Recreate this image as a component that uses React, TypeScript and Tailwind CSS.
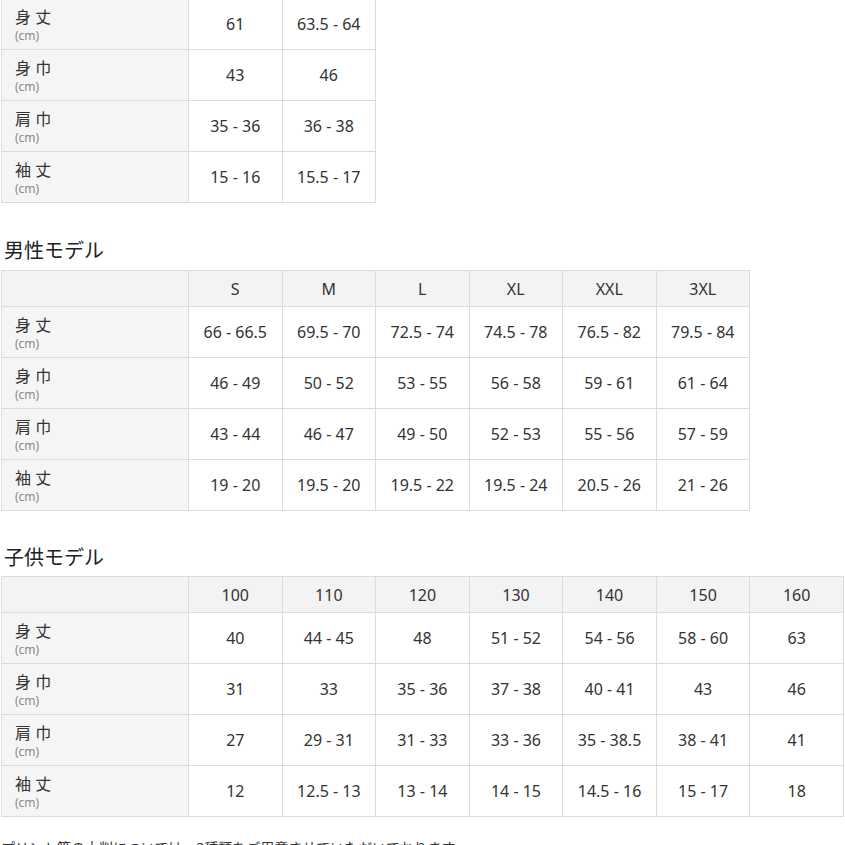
import React from "react";

type Row = { label: string; values: string[] };

const font = {
  fontFamily: '"Noto Sans", "Noto Sans CJK JP", sans-serif',
};

const womenRows: Row[] = [
  { label: "身 丈", values: ["61", "63.5 - 64"] },
  { label: "身 巾", values: ["43", "46"] },
  { label: "肩 巾", values: ["35 - 36", "36 - 38"] },
  { label: "袖 丈", values: ["15 - 16", "15.5 - 17"] },
];

const menSizes = ["S", "M", "L", "XL", "XXL", "3XL"];
const menRows: Row[] = [
  { label: "身 丈", values: ["66 - 66.5", "69.5 - 70", "72.5 - 74", "74.5 - 78", "76.5 - 82", "79.5 - 84"] },
  { label: "身 巾", values: ["46 - 49", "50 - 52", "53 - 55", "56 - 58", "59 - 61", "61 - 64"] },
  { label: "肩 巾", values: ["43 - 44", "46 - 47", "49 - 50", "52 - 53", "55 - 56", "57 - 59"] },
  { label: "袖 丈", values: ["19 - 20", "19.5 - 20", "19.5 - 22", "19.5 - 24", "20.5 - 26", "21 - 26"] },
];

const kidsSizes = ["100", "110", "120", "130", "140", "150", "160"];
const kidsRows: Row[] = [
  { label: "身 丈", values: ["40", "44 - 45", "48", "51 - 52", "54 - 56", "58 - 60", "63"] },
  { label: "身 巾", values: ["31", "33", "35 - 36", "37 - 38", "40 - 41", "43", "46"] },
  { label: "肩 巾", values: ["27", "29 - 31", "31 - 33", "33 - 36", "35 - 38.5", "38 - 41", "41"] },
  { label: "袖 丈", values: ["12", "12.5 - 13", "13 - 14", "14 - 15", "14.5 - 16", "15 - 17", "18"] },
];

const SizeTable: React.FC<{ sizes?: string[]; rows: Row[]; width: string }> = ({ sizes, rows, width }) => {
  const cols = rows[0].values.length;
  return (
    <table className={`table-fixed border-collapse ${width}`}>
      <colgroup>
        <col className="w-[187px]" />
        {Array.from({ length: cols }).map((_, i) => (
          <col key={i} />
        ))}
      </colgroup>
      {sizes && (
        <thead>
          <tr className="h-[36px] bg-[#f3f3f3]">
            <th className="border border-[#dcdcdc]"></th>
            {sizes.map((s) => (
              <th key={s} className="border border-[#dcdcdc] text-center text-[16px] font-normal text-[#333]">
                {s}
              </th>
            ))}
          </tr>
        </thead>
      )}
      <tbody>
        {rows.map((r) => (
          <tr key={r.label} className="h-[51px]">
            <td className="border border-[#dcdcdc] bg-[#f5f5f5] pl-[13px] pt-[2px] align-middle">
              <div className="text-[16px] leading-[22px] text-[#333]">{r.label}</div>
              <div className="text-[12px] leading-[16px] text-[#888]">(cm)</div>
            </td>
            {r.values.map((v, i) => (
              <td key={i} className="border border-[#dcdcdc] bg-white text-center text-[16px] text-[#333]">
                {v}
              </td>
            ))}
          </tr>
        ))}
      </tbody>
    </table>
  );
};

export default function App() {
  return (
    <div className="h-[845px] overflow-hidden bg-white pl-px" style={font}>
      <div className="-mt-[2px]">
        <SizeTable rows={womenRows} width="w-[375px]" />
      </div>
      <h2 className="mt-[35px] pl-[3px] text-[20px] font-normal leading-[26px] text-[#222]">男性モデル</h2>
      <div className="mt-[6px]">
        <SizeTable sizes={menSizes} rows={menRows} width="w-[749px]" />
      </div>
      <h2 className="mt-[34px] pl-[3px] text-[20px] font-normal leading-[26px] text-[#222]">子供モデル</h2>
      <div className="mt-[5px]">
        <SizeTable sizes={kidsSizes} rows={kidsRows} width="w-[843px]" />
      </div>
      <p className="mt-[20px] text-[14px] text-[#333]">
        プリント等の大判については、2種類をご用意させていただいております。
      </p>
    </div>
  );
}
